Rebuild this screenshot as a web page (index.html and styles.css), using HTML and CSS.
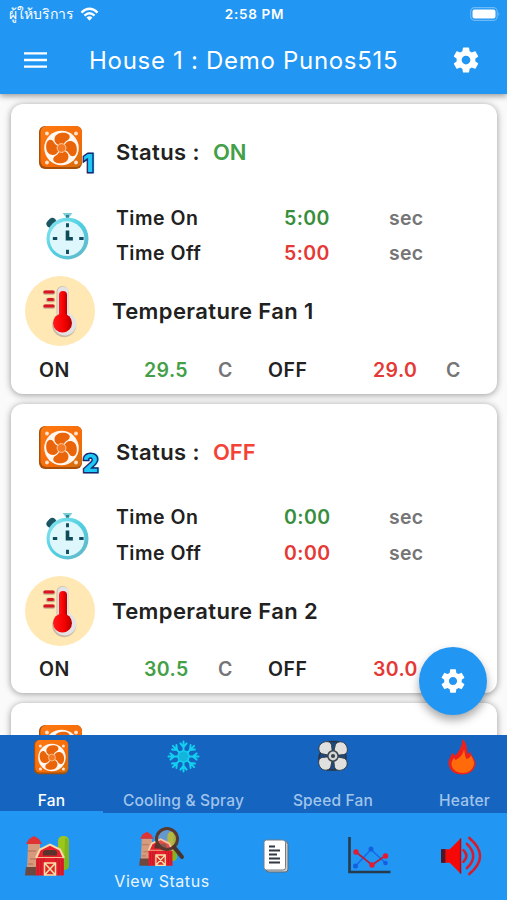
FILE: index.html
```html
<!DOCTYPE html>
<html lang="th">
<head>
    <meta charset="UTF-8">
    <meta name="viewport" content="width=device-width, initial-scale=1.0">
    <title>House 1 : Demo Punos515</title>
    <link rel="stylesheet" href="styles.css">
</head>
<body>
    <svg class="sprite" width="0" height="0" aria-hidden="true">
        <defs>
            <linearGradient id="orange" x1="0" y1="0" x2="1" y2="1">
                <stop offset="0" stop-color="#ff7a12"/>
                <stop offset="0.65" stop-color="#f56b08"/>
                <stop offset="1" stop-color="#d07010"/>
            </linearGradient>
            <linearGradient id="clockRim" x1="0" y1="0" x2="1" y2="1">
                <stop offset="0" stop-color="#8fe6f2"/>
                <stop offset="0.5" stop-color="#4fcfe0"/>
                <stop offset="1" stop-color="#6ab4c4"/>
            </linearGradient>
            <linearGradient id="mercury" x1="0" y1="0" x2="1" y2="0">
                <stop offset="0" stop-color="#ff1a1a"/>
                <stop offset="0.6" stop-color="#f50000"/>
                <stop offset="1" stop-color="#b30000"/>
            </linearGradient>
        </defs>
        <symbol id="fan" viewBox="0 0 44 44">
            <rect x="0" y="0" width="43" height="43" rx="6" fill="#a8500a"/>
            <rect x="1.500" y="0" width="41.500" height="41" rx="6" fill="url(#orange)"/>
            <g fill="#ffe3cf">
                <circle cx="8" cy="7.500" r="1.900"/>
                <circle cx="37" cy="7.500" r="1.900"/>
                <circle cx="8" cy="36.500" r="1.900"/>
                <circle cx="37" cy="36.500" r="1.900"/>
            </g>
            <circle cx="22.500" cy="22" r="17.300" fill="#fff7f0"/>
            <g fill="#ea650a">
                <path id="blade" d="M20.500 19.500C16.500 18 14.500 14.500 16 11C17.500 7 23 6 27 7C32 8.500 31.500 12.500 28.500 14.200C26 15.500 25 17 24.500 19.500Z"/>
                <use href="#blade" transform="rotate(90 22.500 22)"/>
                <use href="#blade" transform="rotate(180 22.500 22)"/>
                <use href="#blade" transform="rotate(270 22.500 22)"/>
            </g>
            <circle cx="22.500" cy="22" r="4.400" fill="#f57a25" stroke="#fbc9a0" stroke-width="1"/>
        </symbol>
        <symbol id="clock" viewBox="0 0 44 50">
            <path d="M4.500 13l2-2" stroke="#1b5662" stroke-width="8" stroke-linecap="round"/>
            <path d="M17 2h10l-3 4h-4z" fill="#7ccdd8"/>
            <rect x="20.500" y="4" width="3" height="4" fill="#2d8291"/>
            <circle cx="22" cy="28" r="21.500" fill="url(#clockRim)"/>
            <circle cx="21.500" cy="28.300" r="17.800" fill="#ddf7fd"/>
            <path d="M22 12.500v4M22 39.500v4.500M7 28h4.500M34 28h4.500" stroke="#114d60" stroke-width="3"/>
            <path d="M22 20v8.300h5.500" fill="none" stroke="#0f4a58" stroke-width="3.700"/>
        </symbol>
        <symbol id="thermometer" viewBox="0 0 70 70">
            <circle cx="35" cy="35" r="35" fill="#ffe8b3"/>
            <path d="M31.500 40V16a6 6 0 0 1 12 0V38a12 12 0 1 1-12 2z" fill="#c9b9a2"/>
            <path d="M32.500 39V16a5.500 5.500 0 0 1 11 0V37a11.500 11.500 0 1 1-11 2z" fill="#e3e2e4"/>
            <path d="M34 42V19a4 4 0 0 1 8 0V42z" fill="url(#mercury)"/>
            <circle cx="37.500" cy="47" r="9.500" fill="url(#mercury)"/>
            <path d="M20 16.500h8M23 24h5M20 30.500h8" stroke="#c3ae91" stroke-width="4.500" stroke-linecap="round"/>
            <path d="M20 16h8M23.500 23.500h4M20 30h8" stroke="#dc1420" stroke-width="3" stroke-linecap="round"/>
        </symbol>
        <symbol id="gear" viewBox="0 0 24 24">
            <path fill="currentColor" d="M19.430 12.980c.04-.32.070-.64.070-.98s-.03-.66-.07-.98l2.110-1.650c.19-.15.240-.42.120-.64l-2-3.460c-.12-.22-.39-.3-.61-.22l-2.490 1c-.52-.4-1.080-.73-1.690-.98l-.38-2.650C14.460 2.180 14.250 2 14 2h-4c-.25 0-.46.180-.49.420l-.38 2.650c-.61.250-1.170.590-1.690.980l-2.490-1c-.23-.09-.49 0-.61.220l-2 3.460c-.13.220-.07.490.12.640l2.110 1.650c-.04.320-.07.650-.07.980s.03.660.07.980l-2.110 1.650c-.19.150-.24.420-.12.640l2 3.460c.12.220.39.300.61.220l2.490-1c.52.400 1.080.730 1.690.980l.38 2.650c.03.240.24.420.49.420h4c.25 0 .46-.18.490-.42l.38-2.650c.61-.25 1.170-.59 1.690-.98l2.490 1c.23.090.49 0 .61-.22l2-3.460c.12-.22.070-.49-.12-.64l-2.110-1.650zM12 15.500c-1.930 0-3.500-1.570-3.500-3.500s1.570-3.500 3.500-3.500 3.500 1.570 3.500 3.500-1.570 3.500-3.500 3.500z"/>
        </symbol>
        <symbol id="barn" viewBox="0 0 44 42">
            <rect x="33" y="1" width="11" height="34" rx="5" fill="#9bc61e"/>
            <path d="M40 3c3 0 4 3 4 6v20c0 4-2 6-5 6z" fill="#82b51d"/>
            <path d="M3 9h12l1 26H2z" fill="#d69b7c"/>
            <path d="M3 16h8M5 24h8M3 29h5" stroke="#bd7d65" stroke-width="1.500"/>
            <path d="M1 9L4 4l5-3 5 3 3 5z" fill="#e03434"/>
            <path d="M1 32h12v8.500H0z" fill="#6d4840"/>
            <path d="M11 22l4-8 10-5 10 5 4 8v18.500H11z" fill="#e5202c"/>
            <path d="M13 24v16M16 24v16M34 24v16M37 24v16M19 23v7M31 23v7" stroke="#bb1625" stroke-width="1"/>
            <path d="M11 23l4-8.500 10-5 10 5L39 23" fill="none" stroke="#f8dcae" stroke-width="2"/>
            <path d="M12 22.500h26" stroke="#f5b98b" stroke-width="1"/>
            <path d="M18 20.500v-3q0-2.500 3-2.500h8q3 0 3 2.500v3z" fill="#5a332d"/>
            <path d="M19.500 28h11v12h-11zM19.500 28l11 12M30.500 28l-11 12" fill="#dd2b2b" stroke="#fadfa9" stroke-width="1.500"/>
        </symbol>
        <symbol id="snowflake" viewBox="0 0 34 34">
            <g stroke="#14d0f0" stroke-width="2" stroke-linecap="round" fill="none">
                <path id="arm" d="M17 17V1.500M13.800 3.500l3.200 4 3.200-4"/>
                <use href="#arm" transform="rotate(45 17 17)"/>
                <use href="#arm" transform="rotate(90 17 17)"/>
                <use href="#arm" transform="rotate(135 17 17)"/>
                <use href="#arm" transform="rotate(180 17 17)"/>
                <use href="#arm" transform="rotate(225 17 17)"/>
                <use href="#arm" transform="rotate(270 17 17)"/>
                <use href="#arm" transform="rotate(315 17 17)"/>
                <path d="M17 11l4.300 1.700L23 17l-1.700 4.300L17 23l-4.300-1.700L11 17l1.700-4.300z" fill="#12b6dc" stroke-width="1.500"/>
            </g>
        </symbol>
        <symbol id="speedfan" viewBox="0 0 32 34">
            <path d="M7 3q9-3 18 0l4 10q2 6-1 15l-9 4h-9l-7-4q-4-9 0-15z" fill="#1c4a80" stroke="#28343e" stroke-width="1.600"/>
            <g fill="#e0e0df" stroke="#30383f" stroke-width="1">
                <path id="vane" d="M15.500 14.500L13 16.500 4 14.500C-.5 12 0 5.500 4.500 3 9 .5 14 1.500 14.500 6z"/>
                <use href="#vane" transform="rotate(90 16 17)"/>
                <use href="#vane" transform="rotate(180 16 17)"/>
                <use href="#vane" transform="rotate(270 16 17)"/>
            </g>
            <circle cx="16" cy="17" r="5.500" fill="#d4d6d6" stroke="#38434a" stroke-width="1.600"/>
            <circle cx="16" cy="17" r="2.200" fill="#38434a"/>
        </symbol>
        <symbol id="flame" viewBox="0 0 28 36">
            <path d="M14.500 0C19 4 19 9 19.500 15c2-1 2.500-2 3-3-.5 4 4.500 7 5 12 0 7-6 11.500-13.500 11.500S.5 31 .5 24C.5 19 3 18 4 14c1.500 1 2.500 1.500 3 2.500C12 12 14 6 14.500 0z" fill="#ec211b"/>
            <path d="M16 10c1 5 1 7 2.500 10 3-1 4-2 4.500-4 1 3 3.500 6 3 9-1 6-6 9-11.500 9S3.500 30 3.500 25c0-3 1.500-4 2-6 1 .5 1.500 1 2 2 4-2 8-6 8.500-11z" fill="#ff6a0a"/>
        </symbol>
    </svg>

    <div class="app">
        <header class="appbar">
            <div class="statusbar">
                <div class="carrier">
                    <span>ผู้ให้บริการ</span>
                    <svg class="wifi" viewBox="0 0 20 14">
                        <path d="M1.500 5.500Q10-2.500 18.500 5.500M4.700 8.700Q10 3.700 15.300 8.700" fill="none" stroke="#fff" stroke-width="2.400"/>
                        <path d="M6.900 10.700Q10 7.800 13.100 10.700L10 14z" fill="#fff"/>
                    </svg>
                </div>
                <span class="time">2:58 PM</span>
                <svg class="battery" viewBox="0 0 30 14">
                    <rect x="0.700" y="0.700" width="26.500" height="12.600" rx="3.800" fill="none" stroke="#6dbaf8" stroke-width="1.200"/>
                    <rect x="2.500" y="2.500" width="23" height="9" rx="2" fill="#fff"/>
                    <path d="M28.300 5q2 2 0 4z" fill="#6dbaf8"/>
                </svg>
            </div>
            <div class="toolbar">
                <svg class="menu-icon" viewBox="0 0 23 16">
                    <path d="M0 1.300h23M0 8h23M0 14.700h23" stroke="#fff" stroke-width="2.300"/>
                </svg>
                <h1>House 1 : Demo Punos515</h1>
                <svg class="settings-icon"><use href="#gear"/></svg>
            </div>
        </header>

        <main class="list">
            <section class="card">
                <div class="row-status">
                    <div class="fan-icon">
                        <svg class="fan"><use href="#fan"/></svg>
                        <span class="fan-number">1</span>
                    </div>
                    <span class="label">Status :</span>
                    <span class="status on">ON</span>
                </div>
                <div class="row-time">
                    <svg class="clock"><use href="#clock"/></svg>
                    <div class="times">
                        <span>Time On</span><span class="value dark-green">5:00</span><span class="unit">sec</span>
                        <span>Time Off</span><span class="value red">5:00</span><span class="unit">sec</span>
                    </div>
                </div>
                <div class="row-temp">
                    <svg class="thermometer"><use href="#thermometer"/></svg>
                    <span class="label">Temperature Fan 1</span>
                </div>
                <div class="row-range">
                    <span>ON</span><span class="value green">29.5</span><span class="unit">C</span>
                    <span>OFF</span><span class="value red">29.0</span><span class="unit">C</span>
                </div>
            </section>

            <section class="card">
                <div class="row-status">
                    <div class="fan-icon">
                        <svg class="fan"><use href="#fan"/></svg>
                        <span class="fan-number">2</span>
                    </div>
                    <span class="label">Status :</span>
                    <span class="status off">OFF</span>
                </div>
                <div class="row-time">
                    <svg class="clock"><use href="#clock"/></svg>
                    <div class="times">
                        <span>Time On</span><span class="value dark-green">0:00</span><span class="unit">sec</span>
                        <span>Time Off</span><span class="value red">0:00</span><span class="unit">sec</span>
                    </div>
                </div>
                <div class="row-temp">
                    <svg class="thermometer"><use href="#thermometer"/></svg>
                    <span class="label">Temperature Fan 2</span>
                </div>
                <div class="row-range">
                    <span>ON</span><span class="value green">30.5</span><span class="unit">C</span>
                    <span>OFF</span><span class="value red">30.0</span><span class="unit">C</span>
                </div>
            </section>

            <section class="card">
                <div class="row-status">
                    <div class="fan-icon">
                        <svg class="fan"><use href="#fan"/></svg>
                    </div>
                </div>
            </section>

            <button class="fab" aria-label="Settings"><svg><use href="#gear"/></svg></button>
        </main>

        <nav class="tabs">
            <a class="tab active">
                <svg class="tab-fan"><use href="#fan"/></svg>
                <span>Fan</span>
            </a>
            <a class="tab">
                <svg class="tab-snow"><use href="#snowflake"/></svg>
                <span>Cooling &amp; Spray</span>
            </a>
            <a class="tab">
                <svg class="tab-speed"><use href="#speedfan"/></svg>
                <span>Speed Fan</span>
            </a>
            <a class="tab">
                <svg class="tab-flame"><use href="#flame"/></svg>
                <span>Heater</span>
            </a>
        </nav>

        <nav class="bottom-nav">
            <a class="nav-item">
                <svg class="nav-barn"><use href="#barn"/></svg>
            </a>
            <a class="nav-item selected">
                <svg class="nav-view" viewBox="0 0 46 40">
                    <use href="#barn" x="0" y="4" width="38" height="36"/>
                    <circle cx="28" cy="12" r="10.500" fill="#e6a18a" fill-opacity="0.35" stroke="#58382f" stroke-width="3"/>
                    <path d="M35 20l8 10" stroke="#4b332d" stroke-width="4" stroke-linecap="round"/>
                </svg>
                <span>View Status</span>
            </a>
            <a class="nav-item">
                <svg class="nav-doc" viewBox="0 0 26 34">
                    <rect x="3" y="2.500" width="22" height="30.500" rx="3" fill="#c9cdd0" stroke="#656b70"/>
                    <rect x="1" y="1" width="21.500" height="30" rx="2.500" fill="#fff" stroke="#777d80"/>
                    <path d="M6 7.500h6M6 11.500h11M6 15.500h8M6 19.500h11M6 23.500h11" stroke="#303941" stroke-width="1.900"/>
                </svg>
            </a>
            <a class="nav-item">
                <svg class="nav-chart" viewBox="0 0 43 37">
                    <path d="M1.500 0v35h41" fill="none" stroke="#263b4b" stroke-width="2.600"/>
                    <path d="M7.500 29L23 12.500 37.500 26" fill="none" stroke="#1768e8" stroke-width="1.500"/>
                    <path d="M8 15l16 13 13-9" fill="none" stroke="#b91f3b" stroke-width="1.700"/>
                    <g fill="#125fe0"><circle cx="7.500" cy="29" r="2.500"/><circle cx="23" cy="12" r="2.500"/><circle cx="37.500" cy="26" r="2.300"/></g>
                    <g fill="#e31a30"><circle cx="8" cy="15" r="2.700"/><circle cx="24" cy="28" r="2.700"/><circle cx="37.500" cy="19" r="2.700"/></g>
                </svg>
            </a>
            <a class="nav-item">
                <svg class="nav-speaker" viewBox="0 0 43 40">
                    <path d="M1 13h8L20 2v36L9 27H1z" fill="#f70808"/>
                    <path d="M0 13h4.500v14H0z" fill="#4a1828"/>
                    <path d="M20 2v36" stroke="#b50718" stroke-width="1.500"/>
                    <path d="M23 14q6 6 0 12M26.500 7.500q13 12.500 0 25M29 1.500q22 18.500 0 37" fill="none" stroke="#d81b2c" stroke-width="2.600" stroke-linecap="round"/>
                </svg>
            </a>
        </nav>
    </div>
</body>
</html>
```
FILE: styles.css
```css
* {
    box-sizing: border-box;
}

body {
    margin: 0;
    font-family: Inter, "Noto Sans", sans-serif;
    background-color: #fafafa;
    color: #212121;
}

svg {
    display: block;
    flex-shrink: 0;
}

.sprite {
    position: absolute;
}

.app {
    width: 507px;
    height: 900px;
    display: flex;
    flex-direction: column;
    overflow: hidden;
}

.appbar {
    height: 94px;
    flex-shrink: 0;
    background-color: #2196f3;
    color: #fff;
    box-shadow: 0 2px 6px rgba(0, 0, 0, 0.4);
    z-index: 1;
}

.statusbar {
    height: 27px;
    padding: 0 7px 0 9px;
    display: grid;
    grid-template-columns: 1fr auto 1fr;
    align-items: center;
    font-size: 14px;
}

.carrier {
    display: flex;
    align-items: center;
    gap: 6px;
}

.wifi {
    width: 19px;
    height: 14px;
}

.time {
    font-size: 13.5px;
    font-weight: 600;
    letter-spacing: 0.7px;
}

.battery {
    width: 30px;
    height: 14px;
    justify-self: end;
}

.toolbar {
    height: 66px;
    padding: 0 26px 0 24px;
    display: flex;
    align-items: center;
}

.menu-icon {
    width: 23px;
    height: 16px;
}

.toolbar h1 {
    flex: 1;
    margin: 0;
    padding-left: 42px;
    font-size: 24px;
    font-weight: 400;
    letter-spacing: 0.7px;
    white-space: nowrap;
}

.settings-icon {
    width: 30px;
    height: 30px;
}

.list {
    position: relative;
    flex: 1;
    min-height: 0;
    padding: 10px 10px 0 11px;
    overflow: hidden;
}

.card {
    height: 289.500px;
    margin-bottom: 10px;
    background-color: #fff;
    border-radius: 12px;
    box-shadow: 0 1px 7px rgba(0, 0, 0, 0.4);
    font-weight: 600;
    white-space: nowrap;
}

.row-status {
    height: 96px;
    padding-left: 28px;
    display: flex;
    align-items: center;
}

.fan-icon {
    position: relative;
    width: 77px;
    height: 52px;
}

.fan {
    width: 44px;
    height: 44px;
}

.fan-number {
    position: absolute;
    left: 44px;
    top: 22px;
    font-size: 24px;
    line-height: 32px;
    font-weight: 800;
    color: #1fc8f5;
    -webkit-text-stroke: 3px #102a70;
    paint-order: stroke fill;
}

.label {
    font-size: 22px;
    letter-spacing: 0.4px;
}

.status {
    padding-left: 13px;
    font-size: 22px;
}

.on {
    color: #43a047;
}

.off {
    color: #f44336;
}

.row-time {
    height: 71px;
    padding-left: 35px;
    display: flex;
    align-items: center;
}

.clock {
    width: 43px;
    height: 49px;
}

.times {
    padding-left: 27px;
    display: grid;
    grid-template-columns: 168px 105px auto;
    grid-auto-rows: 35.5px;
    align-items: center;
    font-size: 19.5px;
    letter-spacing: 0.5px;
}

.value {
    letter-spacing: 0.4px;
}

.green {
    color: #43a047;
}

.dark-green {
    color: #388e3c;
}

.red {
    color: #e53935;
}

.unit {
    color: #757575;
    letter-spacing: 0.2px;
}

.row-temp {
    height: 80px;
    padding-left: 14px;
    display: flex;
    align-items: center;
    gap: 17px;
}

.thermometer {
    width: 70px;
    height: 70px;
}

.row-range {
    height: 37px;
    padding-left: 28px;
    display: grid;
    grid-template-columns: 105px 74px 50px 105px 73px auto;
    align-items: center;
    font-size: 19.5px;
    letter-spacing: 0.5px;
}

.fab {
    position: absolute;
    right: 20px;
    bottom: 20px;
    width: 68px;
    height: 68px;
    padding: 0;
    border: none;
    border-radius: 50%;
    display: flex;
    align-items: center;
    justify-content: center;
    background-color: #2196f3;
    color: #fff;
    box-shadow: 0 5px 10px rgba(0, 0, 0, 0.35);
}

.fab svg {
    width: 28px;
    height: 28px;
}

.tabs {
    height: 78px;
    flex-shrink: 0;
    display: grid;
    grid-template-columns: 103px 161px 138px 125px;
    background-color: #1565c0;
    color: #a1c4ea;
    font-size: 15.5px;
    font-weight: 500;
    letter-spacing: 0.2px;
    white-space: nowrap;
}

.tab {
    height: 78px;
    padding: 4px 0 3px;
    display: flex;
    flex-direction: column;
    align-items: center;
    justify-content: space-between;
}

.tab.active {
    color: #fff;
    border-bottom: 2px solid #2196f3;
    padding-bottom: 1px;
}

.tab-fan {
    width: 35px;
    height: 35px;
    margin-top: 1px;
}

.tab-snow {
    width: 33px;
    height: 33px;
    margin-top: 1px;
}

.tab-speed {
    width: 30px;
    height: 34px;
}

.tab-flame {
    width: 28px;
    height: 36px;
    margin-right: 5px;
}

.bottom-nav {
    height: 87px;
    flex-shrink: 0;
    display: grid;
    grid-template-columns: 93px 138px 90px 96px 90px;
    background-color: #2196f3;
    color: #eaf5fe;
}

.nav-item {
    display: flex;
    flex-direction: column;
    align-items: center;
    justify-content: center;
    padding-bottom: 2px;
}

.nav-item.selected {
    justify-content: flex-start;
    padding-top: 14px;
    font-size: 16px;
    letter-spacing: 0.55px;
    gap: 4px;
}

.nav-barn {
    width: 44px;
    height: 42px;
}

.nav-view {
    width: 46px;
    height: 40px;
}

.nav-doc {
    width: 26px;
    height: 34px;
}

.nav-chart {
    width: 43px;
    height: 37px;
}

.nav-speaker {
    width: 42px;
    height: 40px;
}
```
